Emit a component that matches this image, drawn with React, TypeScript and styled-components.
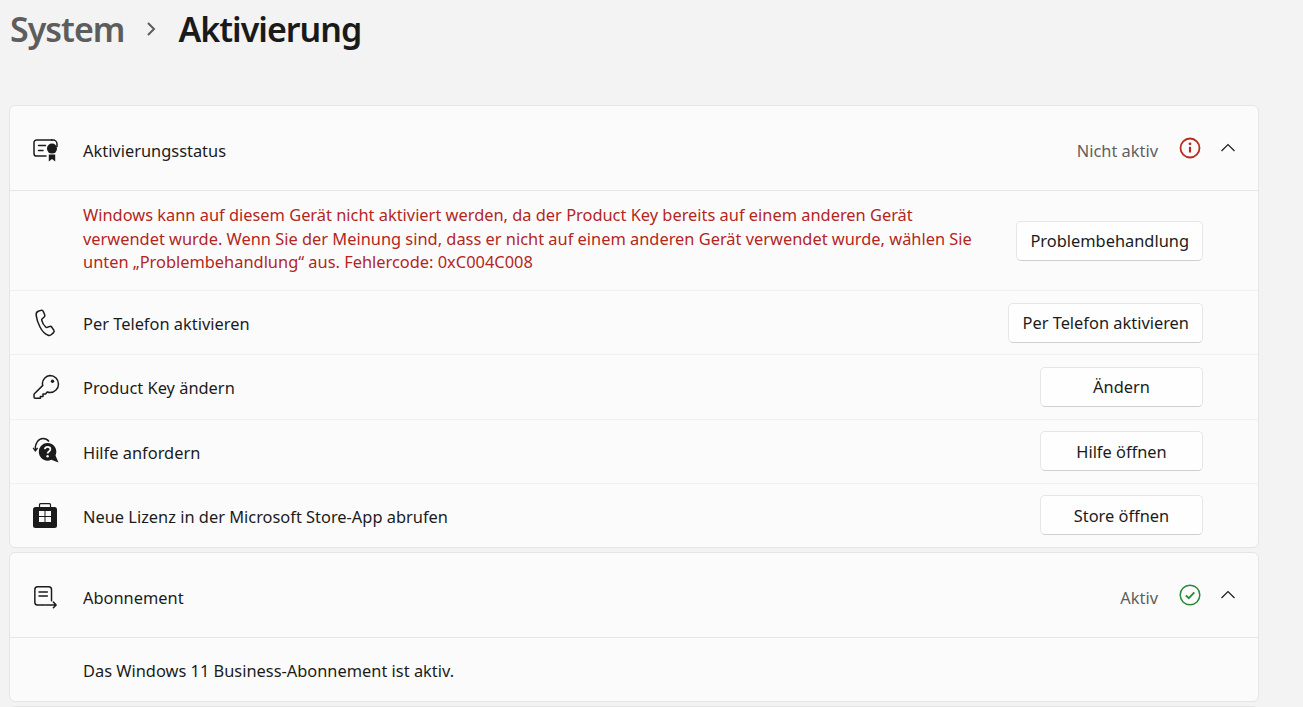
import { createGlobalStyle, styled } from 'styled-components'
import type { ReactNode } from 'react'

const GlobalStyle = createGlobalStyle`
  html, body {
    margin: 0;
    height: 100%;
    overflow: hidden;
    background: #f3f3f3;
    font-family: 'Noto Sans', 'Open Sans', sans-serif;
    color: #1b1b1b;
  }
`

function CertIcon() {
  return (
    <svg width="28" height="24" viewBox="0 0 28 24" fill="none" stroke="#1b1b1b" strokeWidth="1.5">
      <path d="M20 2H4.600a2.600 2.600 0 0 0-2.600 2.600v10.800a2.600 2.600 0 0 0 2.600 2.600H14" strokeLinecap="round" />
      <path d="M6.500 7.500h7M6.500 12.500h4.500" strokeLinecap="round" />
      <circle cx="20" cy="10.600" r="5" fill="#1b1b1b" stroke="none" />
      <path d="M25 9V6a4 4 0 0 0-4-4h-2" />
      <path d="M16.800 16.500v7l3.200-2.400 3.200 2.400v-7z" fill="#1b1b1b" stroke="none" />
    </svg>
  )
}

function PhoneIcon() {
  return (
    <svg width="24" height="28" viewBox="0 0 24 28" fill="none" stroke="#1b1b1b" strokeWidth="1.5" strokeLinejoin="round">
      <path d="M4.200 2.200 7 1.400c1-.3 1.900.2 2.300 1.100l1.400 3.300c.3.800.1 1.700-.5 2.200L8 10c-.3.300-.4.700-.3 1.100.6 2.700 2 5.200 4.200 7.100.3.300.7.300 1.100.2l2.600-.9c.8-.3 1.700 0 2.200.7l2 2.900c.5.800.4 1.900-.3 2.500l-2 1.900c-.9.800-2.200 1.100-3.300.7-3.300-1.100-6-3.900-8.200-8.200C3.800 13.700 2.600 10 2.200 6.300c-.2-1.800.4-3.400 2-4.100z" />
    </svg>
  )
}

function KeyIcon() {
  return (
    <svg width="28" height="26" viewBox="0 0 28 26" fill="none" stroke="#1b1b1b" strokeWidth="1.5" strokeLinejoin="round">
      <path d="M18 1.500a8.500 8.500 0 0 1 0 17c-1 0-2-.2-2.800-.5l-1.700 1.900h-2.500v2.600H8.400v1.800l-1.500 0H3.300c-.7 0-1.300-.6-1.300-1.300v-2.300c0-.4.100-.7.400-1l8.400-8.300c-.3-.9-.4-1.500-.4-2.200A8.500 8.500 0 0 1 18 1.500z" />
      <circle cx="20.500" cy="7.300" r="1.700" fill="#1b1b1b" stroke="none" />
    </svg>
  )
}

function HelpIcon() {
  return (
    <svg width="28" height="28" viewBox="0 0 28 28" fill="none">
      <path d="M3.500 13C2.500 6.500 6.500 1.500 11 1.500c2.500 0 4.500 1 6 3" stroke="#1b1b1b" strokeWidth="1.400" />
      <path d="M1.200 10.800 3.300 14l2.300-3" stroke="#1b1b1b" strokeWidth="1.300" />
      <path d="M15.500 6a8.800 8.800 0 0 1 8 12.500l3 7-7.200-2.700A8.800 8.800 0 1 1 15.500 6z" fill="#1b1b1b" />
      <path d="M12.700 12.200c.3-1.500 1.500-2.300 2.900-2.300 1.600 0 2.800 1 2.800 2.400 0 2.200-2.800 2.200-2.800 4.300" stroke="#fbfbfb" strokeWidth="1.700" />
      <circle cx="15.600" cy="19.300" r="1.200" fill="#fbfbfb" />
    </svg>
  )
}

function StoreIcon() {
  return (
    <StoreSvg width="24" height="25" viewBox="0 0 24 25" fill="none">
      <path d="M6.500 4.500V1.700a1 1 0 0 1 1-1h9a1 1 0 0 1 1 1v2.800" stroke="#1b1b1b" strokeWidth="1.200" />
      <rect x="0" y="4" width="24" height="21" rx="2.500" fill="#1b1b1b" />
      <path d="M6 8h5.500v5H6zM12.500 8H18v5h-5.500zM6 14h5.500v5H6zM12.500 14H18v5h-5.500z" fill="#fbfbfb" />
    </StoreSvg>
  )
}

function SubIcon() {
  return (
    <svg width="25" height="25" viewBox="0 0 27 27" fill="none" stroke="#1b1b1b" strokeWidth="1.600" strokeLinecap="round" strokeLinejoin="round">
      <path d="M13 21.500H5a3 3 0 0 1-3-3V5a3 3 0 0 1 3-3h12a3 3 0 0 1 3 3v12" />
      <path d="M6.500 7.500h9M6.500 12h9" />
      <path d="M14 21.500h11M22 18.500l3 3-3 3" />
    </svg>
  )
}

function ErrorIcon() {
  return (
    <svg width="22" height="22" viewBox="0 0 22 22" fill="none">
      <circle cx="11" cy="11" r="9.500" stroke="#b72c20" strokeWidth="1.800" />
      <circle cx="11" cy="6.800" r="1.400" fill="#b72c20" />
      <path d="M11 9.800v5.700" stroke="#b72c20" strokeWidth="2.200" />
    </svg>
  )
}

function OkIcon() {
  return (
    <svg width="22" height="22" viewBox="0 0 22 22" fill="none">
      <circle cx="11" cy="11" r="9.800" stroke="#2a8a36" strokeWidth="1.500" />
      <path d="m6.800 11.300 3 2.900 5.500-5.800" stroke="#2a8a36" strokeWidth="1.800" />
    </svg>
  )
}

function Chevron() {
  return (
    <ChevronSvg width="16" height="10" viewBox="0 0 16 10" fill="none">
      <path d="M1.500 8 8 1.500 14.500 8" stroke="#1b1b1b" strokeWidth="1.200" />
    </ChevronSvg>
  )
}

function ActionRow({ icon, label, action }: { icon: ReactNode; label: string; action: string }) {
  return (
    <Row>
      <IconCell>{icon}</IconCell>
      <Label>{label}</Label>
      <Button>{action}</Button>
    </Row>
  )
}

export default function App() {
  return (
    <Page>
      <GlobalStyle />
      <Breadcrumb>
        <Parent>System</Parent>
        <Separator width="14" height="18" viewBox="0 0 14 18" fill="none">
          <path d="m3 3 6 6-6 6" stroke="#5c5c5c" strokeWidth="2" />
        </Separator>
        <Current>Aktivierung</Current>
      </Breadcrumb>

      <Cards>
        <Card>
          <CardHeader>
            <HeaderIcon><CertIcon /></HeaderIcon>
            <HeaderLabel>Aktivierungsstatus</HeaderLabel>
            <Status>Nicht aktiv</Status>
            <StatusIcon><ErrorIcon /></StatusIcon>
            <Chevron />
          </CardHeader>
          <ErrorRow>
            <ErrorText>
              Windows kann auf diesem Gerät nicht aktiviert werden, da der Product Key bereits auf einem anderen Gerät
              verwendet wurde. Wenn Sie der Meinung sind, dass er nicht auf einem anderen Gerät verwendet wurde, wählen Sie
              unten „Problembehandlung“ aus. Fehlercode: 0xC004C008
            </ErrorText>
            <Button>Problembehandlung</Button>
          </ErrorRow>
          <ActionRow icon={<PhoneIcon />} label="Per Telefon aktivieren" action="Per Telefon aktivieren" />
          <ActionRow icon={<KeyIcon />} label="Product Key ändern" action="Ändern" />
          <ActionRow icon={<HelpIcon />} label="Hilfe anfordern" action="Hilfe öffnen" />
          <ActionRow icon={<StoreIcon />} label="Neue Lizenz in der Microsoft Store-App abrufen" action="Store öffnen" />
        </Card>

        <Card>
          <CardHeader>
            <HeaderIcon><SubIcon /></HeaderIcon>
            <HeaderLabel>Abonnement</HeaderLabel>
            <Status>Aktiv</Status>
            <StatusIcon><OkIcon /></StatusIcon>
            <Chevron />
          </CardHeader>
          <Row>
            <IconCell />
            <Label>Das Windows 11 Business-Abonnement ist aktiv.</Label>
          </Row>
        </Card>
        <Card />
      </Cards>
    </Page>
  )
}

const Page = styled.div`
  width: 1303px;
  height: 707px;
  overflow: hidden;
  box-sizing: border-box;
  padding: 0 44px 0 9px;
`

const Breadcrumb = styled.div`
  height: 105px;
  box-sizing: border-box;
  display: flex;
  align-items: flex-start;
  padding-left: 1px;
  font-size: 34px;
  font-weight: 600;
  line-height: 58px;
`

const Parent = styled.span`
  color: #5d5d5d;
  letter-spacing: -1px;
`

const Separator = styled.svg`
  margin: 20px 19px 0 21px;
`

const Current = styled.span`
  color: #1a1a1a;
  letter-spacing: -1px;
`

const Cards = styled.div`
  display: flex;
  flex-direction: column;
  gap: 4px;
`

const Card = styled.section`
  background: #fbfbfb;
  border: 1px solid #e5e5e5;
  border-radius: 6px;
  min-height: 60px;
`

const CardHeader = styled.div`
  height: 84px;
  display: flex;
  align-items: center;
  padding-right: 22px;
  border-bottom: 1px solid #e6e6e6;
`

const IconCell = styled.div`
  width: 73px;
  flex: none;
  display: flex;
  justify-content: center;
  padding-right: 2px;
  box-sizing: border-box;
`

const HeaderIcon = styled(IconCell)`
  margin-top: 4px;
`

const StoreSvg = styled.svg`
  margin-right: 2px;
`

const Label = styled.span`
  flex: 1;
  margin-top: 2px;
  font-size: 16.4px;
  color: #1b1b1b;
`

const HeaderLabel = styled(Label)`
  margin-top: 4px;
`

const Status = styled.span`
  margin-top: 4px;
  font-size: 16.4px;
  color: #5f5f5f;
`

const StatusIcon = styled.span`
  display: flex;
  margin-left: 21px;
`

const ChevronSvg = styled.svg`
  margin-left: 19px;
`

const Row = styled.div`
  height: 63.25px;
  display: flex;
  align-items: center;
  padding-right: 55px;
  border-bottom: 1px solid #f0f0f0;

  &:last-child {
    border-bottom: none;
  }
`

const ErrorRow = styled(Row)`
  height: 99px;
  padding-left: 73px;
  justify-content: space-between;
`

const ErrorText = styled.p`
  margin: -4px 0 0;
  width: 900px;
  font-size: 16.4px;
  line-height: 23.5px;
  color: #b3261e;
`

const Button = styled.button`
  height: 40px;
  flex: none;
  min-width: 163px;
  box-sizing: border-box;
  padding: 0 13px;
  background: #fefefe;
  border: 1px solid #e6e6e6;
  border-bottom-color: #cfcfcf;
  border-radius: 5px;
  font-family: inherit;
  font-size: 16.4px;
  color: #1b1b1b;
`
